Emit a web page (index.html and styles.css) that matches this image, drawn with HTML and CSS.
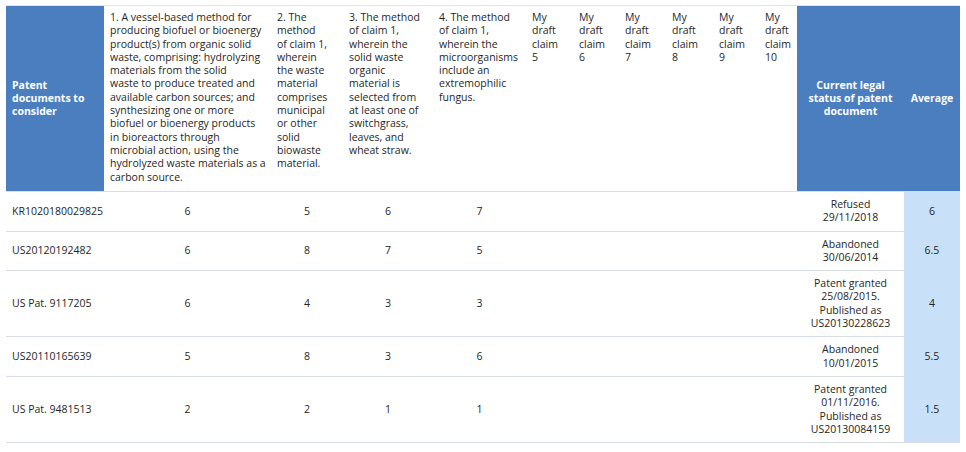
FILE: index.html
```html
<!DOCTYPE html>
<html>
<head>
<meta charset="utf-8">
<link rel="stylesheet" href="styles.css">
</head>
<body>
<table class="grid">
  <colgroup>
    <col class="w-doc"><col class="w-c1"><col class="w-c2"><col class="w-c3"><col class="w-c4">
    <col class="w-d5"><col class="w-d6"><col class="w-d7"><col class="w-d8"><col class="w-d9"><col class="w-d10">
    <col class="w-legal"><col class="w-avg">
  </colgroup>
  <thead>
    <tr>
      <th class="hb left">Patent documents to consider</th>
      <th class="hc">1. A vessel-based method for<br>producing biofuel or bioenergy<br>product(s) from organic solid<br>waste, comprising: hydrolyzing<br>materials from the solid<br>waste to produce treated and<br>available carbon sources; and<br>synthesizing one or more<br>biofuel or bioenergy products<br>in bioreactors through<br>microbial action, using the<br>hydrolyzed waste materials as a<br>carbon source.</th>
      <th class="hc">2. The<br>method<br>of claim 1,<br>wherein<br>the waste<br>material<br>comprises<br>municipal<br>or other<br>solid<br>biowaste<br>material.</th>
      <th class="hc">3. The method<br>of claim 1,<br>wherein the<br>solid waste<br>organic<br>material is<br>selected from<br>at least one of<br>switchgrass,<br>leaves, and<br>wheat straw.</th>
      <th class="hc">4. The method<br>of claim 1,<br>wherein the<br>microorganisms<br>include an<br>extremophilic<br>fungus.</th>
      <th class="hc">My<br>draft<br>claim<br>5</th>
      <th class="hc">My<br>draft<br>claim<br>6</th>
      <th class="hc">My<br>draft<br>claim<br>7</th>
      <th class="hc">My<br>draft<br>claim<br>8</th>
      <th class="hc">My<br>draft<br>claim<br>9</th>
      <th class="hc">My<br>draft<br>claim<br>10</th>
      <th class="hb">Current legal status of patent document</th>
      <th class="hb">Average</th>
    </tr>
  </thead>
  <tbody>
    <tr>
      <td class="doc">KR1020180029825</td>
      <td>6</td><td>5</td><td>6</td><td>7</td>
      <td></td><td></td><td></td><td></td><td></td><td></td>
      <td>Refused<br>29/11/2018</td>
      <td class="avg">6</td>
    </tr>
    <tr>
      <td class="doc">US20120192482</td>
      <td>6</td><td>8</td><td>7</td><td>5</td>
      <td></td><td></td><td></td><td></td><td></td><td></td>
      <td>Abandoned<br>30/06/2014</td>
      <td class="avg">6.5</td>
    </tr>
    <tr>
      <td class="doc">US Pat. 9117205</td>
      <td>6</td><td>4</td><td>3</td><td>3</td>
      <td></td><td></td><td></td><td></td><td></td><td></td>
      <td>Patent granted<br>25/08/2015.<br>Published as<br>US20130228623</td>
      <td class="avg">4</td>
    </tr>
    <tr>
      <td class="doc">US20110165639</td>
      <td>5</td><td>8</td><td>3</td><td>6</td>
      <td></td><td></td><td></td><td></td><td></td><td></td>
      <td>Abandoned<br>10/01/2015</td>
      <td class="avg">5.5</td>
    </tr>
    <tr>
      <td class="doc">US Pat. 9481513</td>
      <td>2</td><td>2</td><td>1</td><td>1</td>
      <td></td><td></td><td></td><td></td><td></td><td></td>
      <td>Patent granted<br>01/11/2016.<br>Published as<br>US20130084159</td>
      <td class="avg">1.5</td>
    </tr>
  </tbody>
</table>
</body>
</html>
```
FILE: styles.css
```css
html, body {
  margin: 0;
  padding: 0;
  background: #ffffff;
}
body {
  padding: 5px 0 0 6px;
  font-family: "Open Sans", "Noto Sans", sans-serif;
  font-size: 10.5px;
  line-height: 13.3px;
  color: #262626;
}
.grid {
  width: 954px;
  table-layout: fixed;
  border-collapse: collapse;
  border-top: 1px solid #dfe3ea;
}
.w-doc { width: 98px; }
.w-c1 { width: 167px; }
.w-c2 { width: 72px; }
.w-c3 { width: 90px; }
.w-c4 { width: 93px; }
.w-d5 { width: 47px; }
.w-d6 { width: 46px; }
.w-d7 { width: 47px; }
.w-d8 { width: 47px; }
.w-d9 { width: 46px; }
.w-d10 { width: 38px; }
.w-legal { width: 107px; }
.w-avg { width: 56px; }

th, td {
  padding: 0;
}
.hb {
  background: #4a7ebe;
  color: #ffffff;
  font-weight: 700;
  text-align: center;
  vertical-align: middle;
  padding: 0 4px;
}
.hb.left {
  text-align: left;
  padding-left: 6px;
}
.hc {
  font-weight: 400;
  text-align: left;
  vertical-align: top;
  white-space: nowrap;
  overflow: hidden;
  padding: 5px 0 6px 6px;
  height: 174px;
  color: #1f1f1f;
}
tbody td {
  border-top: 1px solid #d9dee6;
  text-align: center;
  vertical-align: middle;
  padding: 6px 4px 6px 4px;
}
tbody tr:last-child td {
  border-bottom: 1px solid #d9dee6;
}
tbody td.doc {
  text-align: left;
  padding-left: 6px;
}
tbody td.avg {
  background: #c8e1f8;
  border-top-color: #c8e1f8;
  border-bottom-color: #c8e1f8;
}
```
